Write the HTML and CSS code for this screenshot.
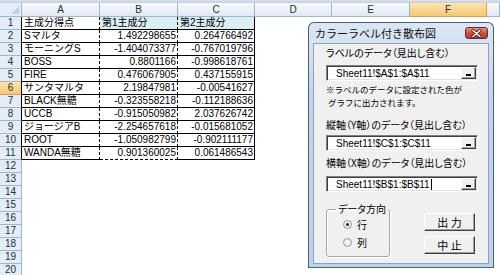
FILE: index.html
```html
<!DOCTYPE html>
<html lang="ja">
<head>
  <meta charset="UTF-8">
  <title>カラーラベル付き散布図</title>
  <link rel="stylesheet" href="styles.css">
</head>
<body>

  <!-- sheet -->
  <div class="book">
    <div class="edge"></div>
    <div class="sheet">
      <div class="corner"></div>
      <div class="ch">A</div>
      <div class="ch">B</div>
      <div class="ch">C</div>
      <div class="ch">D</div>
      <div class="ch">E</div>
      <div class="ch sel">F</div>
      <div class="ch"></div>

      <div class="rh in">1</div><div class="c ca hd">主成分得点</div><div class="c cb hd">第1主成分</div><div class="c cc hd">第2主成分</div>
      <div class="rh in">2</div><div class="c ca">Sマルタ</div><div class="c cb num">1.492298655</div><div class="c cc num">0.264766492</div>
      <div class="rh in">3</div><div class="c ca">モーニングS</div><div class="c cb num">-1.404073377</div><div class="c cc num">-0.767019796</div>
      <div class="rh in">4</div><div class="c ca">BOSS</div><div class="c cb num">0.8801166</div><div class="c cc num">-0.998618761</div>
      <div class="rh in">5</div><div class="c ca">FIRE</div><div class="c cb num">0.476067905</div><div class="c cc num">0.437155915</div>
      <div class="rh in sel">6</div><div class="c ca">サンタマルタ</div><div class="c cb num">2.19847981</div><div class="c cc num">-0.00541627</div>
      <div class="rh in">7</div><div class="c ca">BLACK無糖</div><div class="c cb num">-0.323558218</div><div class="c cc num">-0.112188636</div>
      <div class="rh in">8</div><div class="c ca">UCCB</div><div class="c cb num">-0.915050982</div><div class="c cc num">2.037626742</div>
      <div class="rh in">9</div><div class="c ca">ジョージアB</div><div class="c cb num">-2.254657618</div><div class="c cc num">-0.015681052</div>
      <div class="rh in">10</div><div class="c ca">ROOT</div><div class="c cb num">-1.050982799</div><div class="c cc num">-0.902111177</div>
      <div class="rh in">11</div><div class="c ca last">WANDA無糖</div><div class="c cb num last">0.901360025</div><div class="c cc num last">0.061486543</div>
      <div class="rh">12</div>
      <div class="rh">13</div>
      <div class="rh">14</div>
      <div class="rh">15</div>
      <div class="rh">16</div>
      <div class="rh">17</div>
      <div class="rh">18</div>
      <div class="rh">19</div>
      <div class="rh">20</div>
    </div>

    <!-- dialog -->
    <div class="dialog">
      <div class="title">
        <span>カラーラベル付き散布図</span>
        <span class="close">
          <svg width="11" height="9" viewBox="0 0 11 9">
            <path d="M2 1.5 L9 7.5 M9 1.5 L2 7.5" stroke="#5a1a1a" stroke-width="3.2" stroke-linecap="round"/>
            <path d="M2 1.5 L9 7.5 M9 1.5 L2 7.5" stroke="#fff" stroke-width="1.6" stroke-linecap="round"/>
          </svg>
        </span>
      </div>
      <div class="client">
        <div class="lbl first">ラベルのデータ（見出し含む）</div>
        <div class="ref r1"><span>Sheet11!$A$1:$A$11</span><span class="pick"></span></div>
        <div class="note">※ラベルのデータに設定された色が<br>&nbsp;グラフに出力されます。</div>
        <div class="lbl l2">縦軸（Y軸）のデータ（見出し含む）</div>
        <div class="ref r2"><span>Sheet11!$C$1:$C$11</span><span class="pick"></span></div>
        <div class="lbl l3">横軸（X軸）のデータ（見出し含む）</div>
        <div class="ref r3"><span>Sheet11!$B$1:$B$11<i class="caret"></i></span><span class="pick"></span></div>

        <div class="bottom">
          <fieldset class="grp">
            <legend>データ方向</legend>
            <div class="opt"><span class="radio on"></span>行</div>
            <div class="opt"><span class="radio"></span>列</div>
          </fieldset>
          <div class="btns">
            <div class="btn">出 力</div>
            <div class="btn">中 止</div>
          </div>
        </div>
      </div>
    </div>
  </div>

</body>
</html>
```

FILE: styles.css
```css
* {
  box-sizing: border-box;
}

body {
  margin: 0;
  background: #fff;
  font-family: 'Liberation Sans', 'Noto Sans CJK JP', sans-serif;
  font-size: 10px;
  color: #000;
}

.book {
  position: relative;
  width: 500px;
  height: 275px;
  overflow: hidden;
}

.edge {
  height: 3px;
  background: linear-gradient(#d9e1ec, #c4d0df);
}

/* grid of cells */
.sheet {
  display: grid;
  grid-template-columns: 22px 78px 78px 77px 77px 78px 77px 1fr;
  grid-template-rows: 14px;
  grid-auto-rows: 13px;
}

.corner {
  position: relative;
  background: #e4ecf7;
  border-right: 1px solid #9eb6ce;
  border-bottom: 1px solid #9eb6ce;
}

.corner::after {
  content: "";
  position: absolute;
  right: 2px;
  bottom: 2px;
  border-left: 8px solid transparent;
  border-bottom: 8px solid #c3d1e3;
}

.ch {
  background: linear-gradient(#f7fafd, #e1e9f4);
  border-right: 1px solid #9eb6ce;
  border-bottom: 1px solid #9eb6ce;
  text-align: center;
  line-height: 13px;
  color: #233;
}

.ch.sel,
.rh.sel {
  background: linear-gradient(#fbe4b5, #f5c871);
  border-color: #f29536;
}

.rh {
  grid-column: 1;
  background: #e4ecf7;
  border-right: 1px solid #9eb6ce;
  border-bottom: 1px solid #9eb6ce;
  text-align: center;
  line-height: 12px;
  color: #233;
}

.rh.in {
  border-right-color: #000;
}

.c {
  border-bottom: 1px solid #000;
  border-right: 1px solid #000;
  line-height: 12px;
  padding: 0 2px;
  white-space: nowrap;
  overflow: hidden;
}

.ca { border-right-style: dashed; }
.cb { border-right-style: dashed; }
.cb.last { border-bottom-style: dashed; }

.num {
  text-align: right;
  padding-right: 1px;
}

.cb.hd,
.cc.hd {
  background: #dbeef4;
}

/* dialog window */
.dialog {
  position: absolute;
  left: 308px;
  top: 22px;
  width: 186px;
  height: 246px;
  padding: 0 4px 4px;
  border: 1px solid #4d5c70;
  border-bottom-color: #2d6f8c;
  border-radius: 6px 6px 0 0;
  background: linear-gradient(#dce7f5, #c3d5ec 30%, #bfd1e9);
  font-family: 'Noto Sans CJK JP', 'Liberation Sans', sans-serif;
}

.title {
  height: 20px;
  display: flex;
  align-items: center;
  justify-content: space-between;
  padding-left: 2px;
  font-size: 11px;
  color: #111;
}

.close {
  width: 23px;
  height: 12px;
  margin-right: 1px;
  display: flex;
  align-items: center;
  justify-content: center;
  border: 1px solid #6d2a2a;
  border-radius: 3px;
  background: linear-gradient(#e39a8a, #c8503c 50%, #b8382a);
}

.client {
  height: 221px;
  padding: 0 0 0 12px;
  background: #f0f0f0;
  border: 1px solid #8ea2bd;
}

.lbl {
  height: 12px;
  line-height: 12px;
  font-size: 10px;
  white-space: nowrap;
  font-feature-settings: "palt";
}

.first { margin-top: 3px; }
.l2 { margin-top: 10px; }
.l3 { margin-top: 6px; }

.ref {
  width: 152px;
  height: 16px;
  display: flex;
  align-items: center;
  padding: 0 1px 0 9px;
  background: #fff;
  border: 1px solid;
  border-color: #808080 #fff #fff #808080;
  box-shadow: inset 1px 1px #404040, inset -1px -1px #e3e3e3;
  font-family: 'Liberation Sans', sans-serif;
  font-size: 10px;
}

.r1 { margin-top: 6px; }
.r2 { margin-top: 4px; }
.r3 { margin-top: 7px; }

.ref span:first-child {
  flex: 1;
}

.caret {
  display: inline-block;
  width: 1px;
  height: 11px;
  margin-left: 1px;
  vertical-align: -2px;
  background: #000;
}

.pick {
  position: relative;
  width: 15px;
  height: 12px;
  background: #f0f0f0;
  border: 1px solid;
  border-color: #fff #404040 #404040 #fff;
  box-shadow: inset -1px -1px #a0a0a0;
}

.pick::after {
  content: "";
  position: absolute;
  left: 4px;
  bottom: 2px;
  width: 5px;
  height: 2px;
  background: #000;
}

.note {
  margin-top: 2px;
  font-size: 8.5px;
  line-height: 13px;
  white-space: nowrap;
}

.bottom {
  display: flex;
  margin-top: 11px;
}

.grp {
  width: 64px;
  height: 54px;
  margin: 0;
  padding: 0;
  border: 1px solid #a7a7a7;
  border-radius: 3px;
  box-shadow: 1px 1px #fff, inset 1px 1px #fff;
}

.grp legend {
  padding: 0 2px;
  margin-left: 9px;
  font-size: 10px;
  line-height: 12px;
  white-space: nowrap;
  font-feature-settings: "palt";
}

.opt {
  height: 18px;
  display: flex;
  align-items: center;
  gap: 5px;
  padding-left: 16px;
  font-size: 10px;
}

.radio {
  position: relative;
  width: 9px;
  height: 9px;
  border-radius: 50%;
  border: 1px solid #9a9a9a;
  background: radial-gradient(#fff, #dcdcdc);
}

.radio.on::after {
  content: "";
  position: absolute;
  left: 2px;
  top: 2px;
  width: 3px;
  height: 3px;
  border-radius: 50%;
  background: #222;
}

.btns {
  margin: 10px 0 0 34px;
  display: flex;
  flex-direction: column;
  gap: 5px;
}

.btn {
  width: 51px;
  height: 18px;
  text-align: center;
  line-height: 16px;
  font-size: 11px;
  background: #f0f0f0;
  border: 1px solid;
  border-color: #fff #404040 #404040 #fff;
  box-shadow: inset -1px -1px #a0a0a0;
}
```
